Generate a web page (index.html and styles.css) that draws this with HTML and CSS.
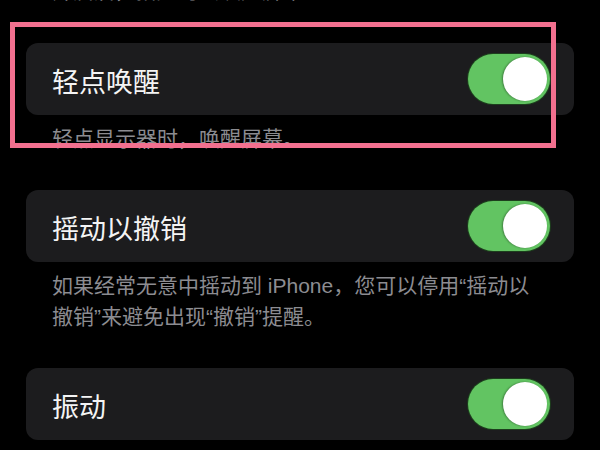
FILE: index.html
```html
<!DOCTYPE html>
<html lang="zh-CN">
<head>
    <meta charset="UTF-8"/>
    <meta name="viewport" content="width=device-width, initial-scale=1.0"/>
    <title>辅助功能 - 触控</title>
    <link rel="stylesheet" href="styles.css">
</head>
<body>

<div class="settings">
    <p class="note lead">开启后，抬起时会唤醒屏幕。</p>

    <div class="row">
        <span class="row_label">轻点唤醒</span>
        <span class="switch on"><span class="knob"></span></span>
    </div>
    <p class="note">轻点显示器时，唤醒屏幕。</p>

    <div class="row">
        <span class="row_label">摇动以撤销</span>
        <span class="switch on"><span class="knob"></span></span>
    </div>
    <p class="note">如果经常无意中摇动到 iPhone，您可以停用“摇动以<br>撤销”来避免出现“撤销”提醒。</p>

    <div class="row">
        <span class="row_label">振动</span>
        <span class="switch on"><span class="knob"></span></span>
    </div>
</div>

<!-- highlight frame drawn over the first setting -->
<div class="highlight"></div>

</body>
</html>
```

FILE: styles.css
```css
body {
    margin: 0;
    background: #000;
    font-family: "Liberation Sans", "Noto Sans CJK SC", sans-serif;
    overflow: hidden;
}

.settings {
    display: flex;
    flex-direction: column;
    padding: 0 26px;
    margin-top: -25px;
}

.note {
    margin: 8px 0 0 0;
    padding: 0 26px;
    font-size: 21px;
    line-height: 31px;
    color: #8c8c91;
}

.note.lead {
    margin: 0 0 1px 0;
}

.row {
    display: flex;
    align-items: center;
    justify-content: space-between;
    height: 72px;
    margin-top: 36px;
    padding: 0 24px 0 26px;
    background: #1c1c1e;
    border-radius: 12px;
}

.row_label {
    font-size: 27px;
    color: #f4f4f4;
    padding-top: 2px;
}

.switch {
    display: flex;
    align-items: center;
    width: 82px;
    height: 50px;
    box-sizing: border-box;
    padding: 0 3px;
    border-radius: 25px;
    background: #3a3a3c;
}

.switch.on {
    justify-content: flex-end;
    background: #62c462;
    box-shadow: 0 0 0 1px #1d3f1d;
}

.knob {
    width: 44px;
    height: 44px;
    border-radius: 50%;
    background: #fff;
    box-shadow: -1px 0 2px rgba(0, 0, 0, 0.35);
}

.highlight {
    position: absolute;
    left: 10px;
    top: 22px;
    width: 546px;
    height: 126px;
    box-sizing: border-box;
    border: 5px solid #f2708f;
}
```
